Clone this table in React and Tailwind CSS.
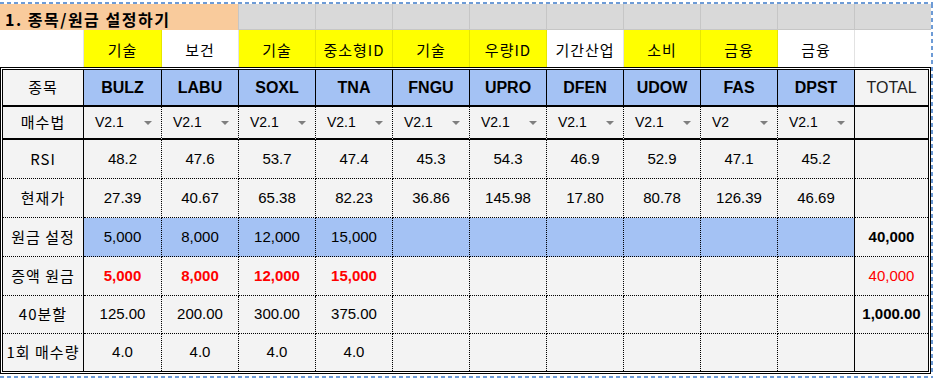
import React from "react";

const KR = "font-['Noto_Sans_CJK_KR','Noto_Sans',sans-serif]";
const EN = "font-['Liberation_Sans','Noto_Sans_CJK_KR',sans-serif]";

const tickers = ["BULZ", "LABU", "SOXL", "TNA", "FNGU", "UPRO", "DFEN", "UDOW", "FAS", "DPST"];
const sectors = [
  ["기술", true],
  ["보건", false],
  ["기술", true],
  ["중소형ID", true],
  ["기술", true],
  ["우량ID", true],
  ["기간산업", false],
  ["소비", true],
  ["금융", true],
  ["금융", false],
];
const methods = ["V2.1", "V2.1", "V2.1", "V2.1", "V2.1", "V2.1", "V2.1", "V2.1", "V2", "V2.1"];
const rsi = ["48.2", "47.6", "53.7", "47.4", "45.3", "54.3", "46.9", "52.9", "47.1", "45.2"];
const price = ["27.39", "40.67", "65.38", "82.23", "36.86", "145.98", "17.80", "80.78", "126.39", "46.69"];
const principal = ["5,000", "8,000", "12,000", "15,000", "", "", "", "", "", ""];
const split = ["125.00", "200.00", "300.00", "375.00", "", "", "", "", "", ""];
const qty = ["4.0", "4.0", "4.0", "4.0", "", "", "", "", "", ""];

function Arrow() {
  return (
    <svg width="8" height="4" viewBox="0 0 8 4" className="shrink-0">
      <polygon points="0,0 8,0 4,4" fill="#7f7f7f" />
    </svg>
  );
}

function rightBorder(c, solidAll) {
  if (c === 11) return "";
  if (c === 0 || c === 10 || solidAll) return "border-r [border-right-style:solid]";
  return "border-r [border-right-style:dotted]";
}

function DataRow({ label, values, h, last, blue, valueClass, total, totalClass }) {
  const hClass = h === 39 ? "h-[39px]" : h === 38 ? "h-[38px]" : "h-[37px]";
  const bottom = last ? "" : "border-b [border-bottom-style:dotted]";
  return (
    <>
      <div className={`${hClass} ${bottom} ${rightBorder(0)} border-black bg-[#f3f3f3] flex items-center justify-center ${KR} text-[15px] tracking-[1px] text-black whitespace-nowrap`}>
        {label}
      </div>
      {values.map((v, i) => (
        <div
          key={i}
          className={`${hClass} ${bottom} ${rightBorder(i + 1)} border-black ${blue ? "bg-[#a4c2f4]" : "bg-[#f3f3f3]"} flex items-center justify-center ${EN} text-[15px] ${valueClass}`}
        >
          {v}
        </div>
      ))}
      <div className={`${hClass} ${bottom} border-black bg-[#f3f3f3] flex items-center justify-center ${EN} text-[15px] ${totalClass || ""}`}>
        {total}
      </div>
    </>
  );
}

export default function App() {
  return (
    <div className="w-[935px] h-[379px] bg-white pt-[2px] overflow-hidden">
      <div className="w-[933px] h-[2px] bg-[repeating-linear-gradient(90deg,#6d9bd6_0px,#6d9bd6_4px,#ffffff_4px,#ffffff_7px)]" />
      <div className="flex">
        <div className="w-[931px] flex flex-col">
          {/* Row 1: title */}
          <div className="grid grid-cols-[84px_78px_repeat(9,77px)_1fr] h-[26px]">
            <div className={`col-span-3 bg-[#f9cb9c] border-r border-[#c6c6c6] flex items-end pb-[1px] pl-[5px] ${KR} text-[16px] font-bold tracking-[1.5px] text-black leading-[20px] whitespace-nowrap`}>
              1. 종목/원금 설정하기
            </div>
            {Array.from({ length: 8 }).map((_, i) => (
              <div key={i} className="bg-[#d9d9d9] border-r border-b border-[#c6c6c6]" />
            ))}
            <div className="bg-[#d9d9d9] border-b border-[#c6c6c6]" />
          </div>
          {/* Row 2: sectors */}
          <div className="grid grid-cols-[84px_78px_repeat(9,77px)_1fr] h-[37px]">
            <div className="bg-white border-r border-[#e2e2e2]" />
            {sectors.map(([s, y], i) => (
              <div
                key={i}
                className={`${y ? "bg-[#ffff00] border-[#e6e600]" : "bg-white border-[#e2e2e2]"} border-r flex items-center justify-center ${KR} text-[15px] tracking-[1px] text-black pt-[3px] whitespace-nowrap`}
              >
                {s}
              </div>
            ))}
            <div className="bg-white" />
          </div>
          {/* Main table */}
          <div className="border-[3px] border-double border-black">
            <div className="grid grid-cols-[81px_78px_repeat(9,77px)_1fr]">
              <div className={`h-[37px] border-b-2 border-r border-black bg-[#f3f3f3] flex items-center justify-center ${KR} text-[15px] tracking-[1px]`}>
                종목
              </div>
              {tickers.map((t) => (
                <div
                  key={t}
                  className={`h-[37px] border-b-2 border-r border-black bg-[#a4c2f4] flex items-center justify-center ${EN} text-[16px] font-bold text-black`}
                >
                  {t}
                </div>
              ))}
              <div className={`h-[37px] border-b-2 border-black bg-[#f3f3f3] flex items-center justify-center ${EN} text-[16px] text-[#222]`}>
                TOTAL
              </div>

              <div className={`h-[33px] border-b-2 ${rightBorder(0)} border-black bg-[#f3f3f3] flex items-center justify-center ${KR} text-[15px] tracking-[1px]`}>
                매수법
              </div>
              {methods.map((m, i) => (
                <div
                  key={i}
                  className={`h-[33px] border-b-2 [border-bottom-style:solid] ${rightBorder(i + 1)} border-black bg-[#f3f3f3] flex items-center justify-between pl-[11px] pr-[9px] ${EN} text-[14px] text-black`}
                >
                  <span>{m}</span>
                  <Arrow />
                </div>
              ))}
              <div className="h-[33px] border-b-2 border-black bg-[#f3f3f3]" />

              <DataRow label="RSI" values={rsi} h={39} valueClass="text-black" />
              <DataRow label="현재가" values={price} h={39} valueClass="text-black" />
              <DataRow label="원금 설정" values={principal} h={39} blue valueClass="text-black" total="40,000" totalClass="font-bold text-black" />
              <DataRow label="증액 원금" values={principal} h={39} valueClass="font-bold text-[#ff0000]" total="40,000" totalClass="text-[#ff0000]" />
              <DataRow label="40분할" values={split} h={38} valueClass="text-black" total="1,000.00" totalClass="font-bold text-black" />
              <DataRow label="1회 매수량" values={qty} h={37} last valueClass="text-black" />
            </div>
          </div>
        </div>
        <div className="w-[2px] bg-[repeating-linear-gradient(180deg,#6d9bd6_0px,#6d9bd6_4px,#ffffff_4px,#ffffff_7px)]" />
      </div>
      <div className="w-[933px] h-[2px] mt-[2px] bg-[repeating-linear-gradient(90deg,#6d9bd6_0px,#6d9bd6_4px,#ffffff_4px,#ffffff_7px)]" />
    </div>
  );
}
